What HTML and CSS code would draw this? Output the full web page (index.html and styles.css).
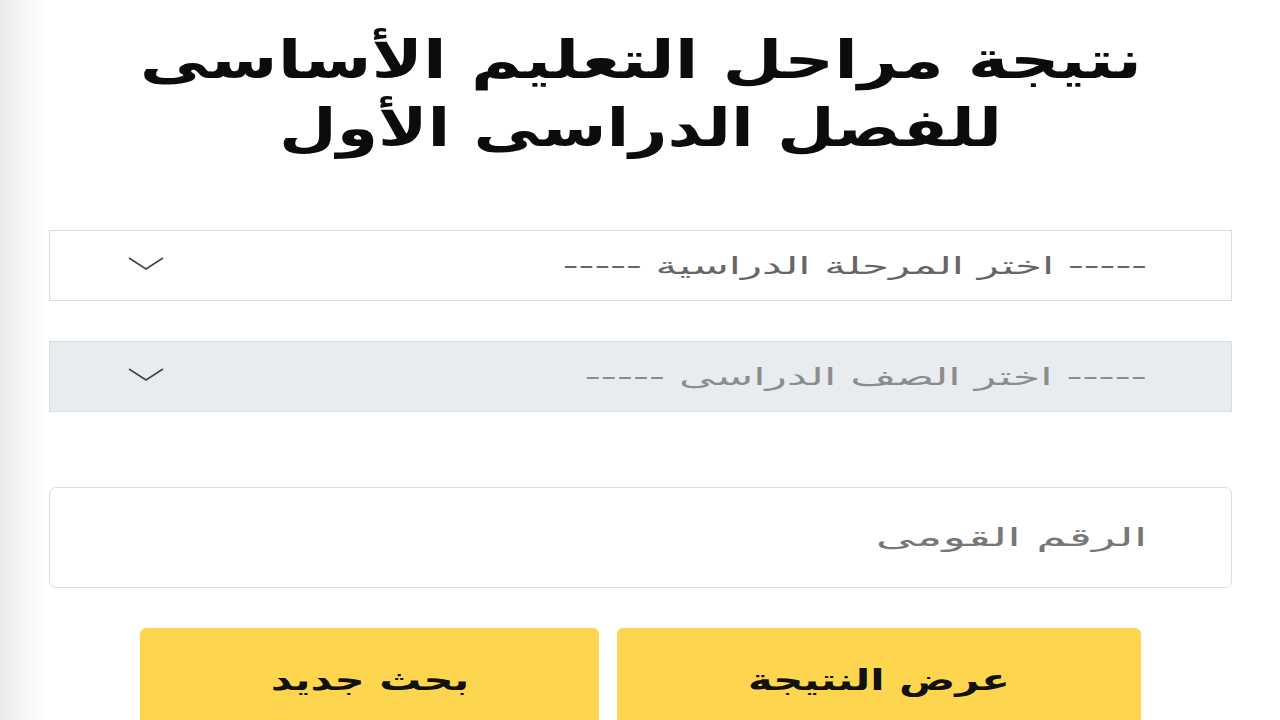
FILE: index.html
```html
<!DOCTYPE html>
<html lang="ar" dir="rtl">
<head>
<meta charset="utf-8">
<title>نتيجة مراحل التعليم الأساسى</title>
<link rel="stylesheet" href="styles.css">
</head>
<body>
<main class="page">
  <h1 class="title"><span class="title-line line-1">نتيجة مراحل التعليم الأساسى</span><span class="title-line line-2">للفصل الدراسى الأول</span></h1>
  <form class="form">
    <div class="select">
      <span class="select-text">----- اختر المرحلة الدراسية -----</span>
      <svg class="chevron" width="36" height="14" viewBox="0 0 36 14"><path d="M1 1 L18 12 L35 1" fill="none" stroke="#444" stroke-width="1.6"/></svg>
    </div>
    <div class="select select-disabled">
      <span class="select-text">----- اختر الصف الدراسى -----</span>
      <svg class="chevron" width="36" height="14" viewBox="0 0 36 14"><path d="M1 1 L18 12 L35 1" fill="none" stroke="#444" stroke-width="1.6"/></svg>
    </div>
    <div class="input"><span class="placeholder">الرقم القومى</span></div>
    <div class="buttons">
      <button type="button" class="btn btn-show"><span class="btn-label">عرض النتيجة</span></button>
      <button type="button" class="btn btn-new"><span class="btn-label">بحث جديد</span></button>
    </div>
  </form>
</main>
</body>
</html>
```
FILE: styles.css
```css
html, body {
  margin: 0;
  padding: 0;
}
body {
  width: 1280px;
  height: 720px;
  overflow: hidden;
  background: linear-gradient(to right, #ebebeb 0px, #f4f4f4 20px, #ffffff 46px);
  font-family: "DejaVu Sans", sans-serif;
  color: #111;
}
.page {
  padding: 26px 48px 0 49px;
}
.title {
  margin: 0;
  display: flex;
  flex-direction: column;
  align-items: center;
  font-family: "DejaVu Sans", sans-serif;
  font-weight: bold;
  font-size: 52px;
  line-height: 68px;
  color: #0c0c0c;
}
.title-line {
  display: block;
}
.line-1 {
  transform: scaleX(1.33);
}
.line-2 {
  transform: scaleX(1.28);
}
.form {
  display: flex;
  flex-direction: column;
  margin-top: 68px;
}
.select {
  box-sizing: border-box;
  height: 71px;
  border: 1px solid #dcdcdc;
  background: #fff;
  display: flex;
  align-items: center;
  justify-content: space-between;
  padding: 0 84px 0 78px;
}
.select-disabled {
  margin-top: 40px;
  background: #e9ecef;
}
.select-text {
  display: inline-block;
  font-size: 24px;
  color: #666;
  transform: scaleX(1.82);
  transform-origin: right center;
}
.select-disabled .select-text {
  color: #8c8c8c;
  transform: scaleX(1.85);
}
.chevron {
  display: block;
  margin-top: -4px;
}
.input {
  box-sizing: border-box;
  margin-top: 75px;
  height: 101px;
  border: 1px solid #dddddd;
  border-radius: 7px;
  display: flex;
  align-items: center;
  padding: 0 84px;
}
.placeholder {
  display: inline-block;
  font-size: 25px;
  color: #777;
  transform: scaleX(1.95);
  transform-origin: right center;
}
.buttons {
  display: flex;
  gap: 18px;
  margin-top: 40px;
  padding: 0 91px;
}
.btn {
  height: 104px;
  border: none;
  border-radius: 6px;
  background: #fdd54f;
  font-family: "DejaVu Sans", sans-serif;
  font-weight: bold;
  font-size: 29px;
  color: #111;
  padding: 0;
}
.btn-label {
  display: inline-block;
  transform: scaleX(1.44);
}
.btn-show {
  width: 524px;
}
.btn-new {
  width: 459px;
}
```
